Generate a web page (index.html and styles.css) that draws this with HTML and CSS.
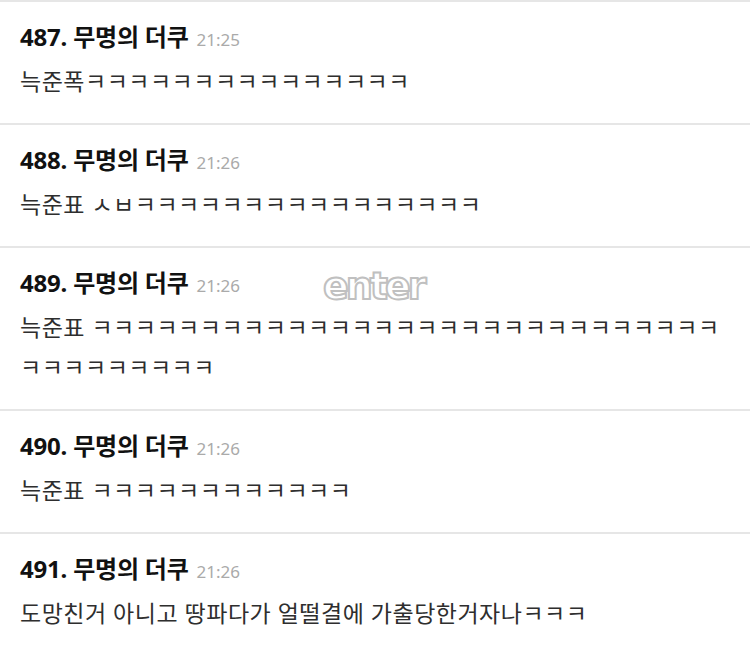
FILE: index.html
```html
<!DOCTYPE html>
<html lang="ko">
<head>
    <meta charset="utf-8">
    <title>무명의 더쿠 댓글</title>
    <link rel="stylesheet" href="styles.css">
</head>
<body>
    <div class="thread">
        <div class="post">
            <div class="post-head">
                <span class="post-author">487. 무명의 더쿠</span>
                <span class="post-time">21:25</span>
            </div>
            <p class="post-body">늑준폭ㅋㅋㅋㅋㅋㅋㅋㅋㅋㅋㅋㅋㅋㅋㅋ</p>
        </div>
        <div class="post">
            <div class="post-head">
                <span class="post-author">488. 무명의 더쿠</span>
                <span class="post-time">21:26</span>
            </div>
            <p class="post-body">늑준표 ㅅㅂㅋㅋㅋㅋㅋㅋㅋㅋㅋㅋㅋㅋㅋㅋㅋㅋ</p>
        </div>
        <div class="post">
            <div class="post-head">
                <span class="post-author">489. 무명의 더쿠</span>
                <span class="post-time">21:26</span>
            </div>
            <p class="post-body">늑준표 ㅋㅋㅋㅋㅋㅋㅋㅋㅋㅋㅋㅋㅋㅋㅋㅋㅋㅋㅋㅋㅋㅋㅋㅋㅋㅋㅋㅋㅋ<br>ㅋㅋㅋㅋㅋㅋㅋㅋㅋ</p>
        </div>
        <div class="post">
            <div class="post-head">
                <span class="post-author">490. 무명의 더쿠</span>
                <span class="post-time">21:26</span>
            </div>
            <p class="post-body">늑준표 ㅋㅋㅋㅋㅋㅋㅋㅋㅋㅋㅋㅋ</p>
        </div>
        <div class="post">
            <div class="post-head">
                <span class="post-author">491. 무명의 더쿠</span>
                <span class="post-time">21:26</span>
            </div>
            <p class="post-body">도망친거 아니고 땅파다가 얼떨결에 가출당한거자나ㅋㅋㅋ</p>
        </div>

        <!-- site watermark over the list -->
        <div class="watermark">enter</div>
    </div>
</body>
</html>
```

FILE: styles.css
```css
body {
    margin: 0;
    background-color: #fff;
    font-family: "Noto Sans", "Noto Sans CJK KR", sans-serif;
}
.thread {
    position: relative;
    width: 750px;
}
.post {
    border-top: 2px solid #e6e6e6;
    padding: 19px 20px 22px;
}
.post:last-of-type {
    border-bottom: 2px solid #e6e6e6;
}
.post-head {
    display: flex;
    align-items: baseline;
    gap: 8px;
    line-height: 32px;
}
.post-author {
    font-size: 24px;
    font-weight: bold;
    letter-spacing: -0.2px;
    color: #111;
}
.post-time {
    font-size: 17px;
    color: #aaa;
}
.post-body {
    margin: 5px 0 0;
    font-size: 23px;
    line-height: 40px;
    letter-spacing: 0.5px;
    color: #2e2e2e;
}
.watermark {
    position: absolute;
    top: 264px;
    left: 323px;
    font-family: "DejaVu Sans", sans-serif;
    font-size: 38px;
    font-weight: bold;
    letter-spacing: -3px;
    color: #fff;
    -webkit-text-stroke: 2px #c0c0c0;
}
```
